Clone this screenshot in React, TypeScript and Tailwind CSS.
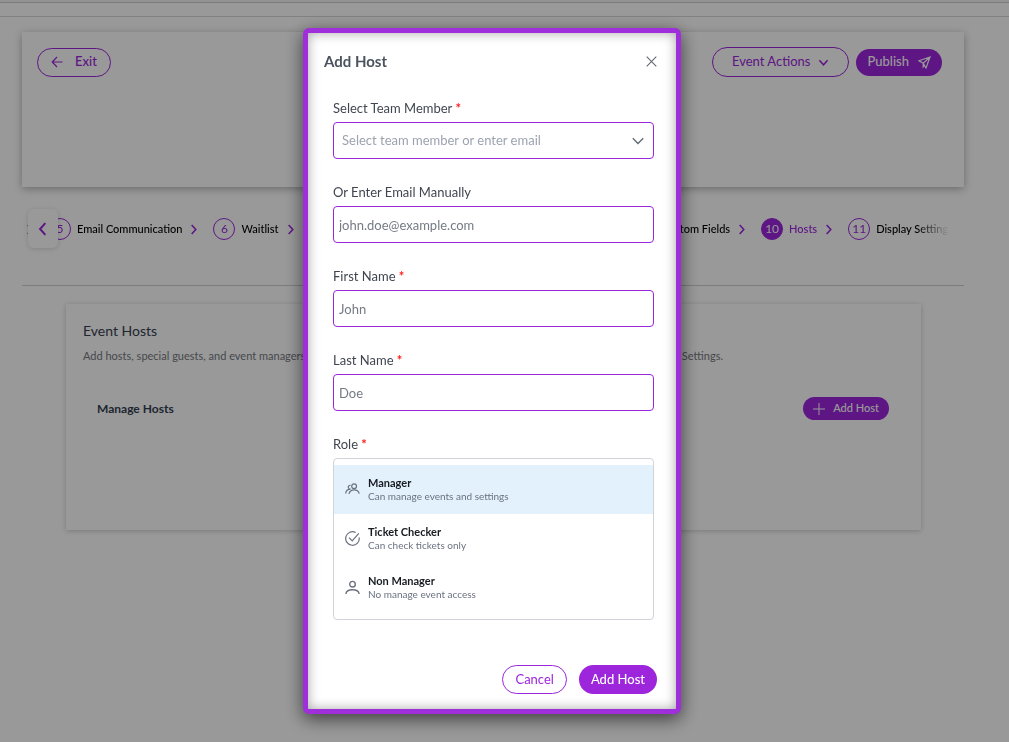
import { useState } from 'react'
import type { ReactNode } from 'react'
import clsx from 'clsx'

const ROLES = [
  { id: 'manager', label: 'Manager', hint: 'Can manage events and settings', icon: TeamIcon },
  { id: 'checker', label: 'Ticket Checker', hint: 'Can check tickets only', icon: CheckIcon },
  { id: 'non-manager', label: 'Non Manager', hint: 'No manage event access', icon: UserIcon },
]

function TeamIcon() {
  return (
    <svg width="15" height="15" viewBox="0 0 15 15" fill="none" stroke="currentColor" strokeWidth="1.2">
      <circle cx="9.1" cy="4.2" r="2.4" />
      <path d="M4 12c.5-2.5 2.500-4.100 5.100-4.100s4.600 1.600 5.200 3.800" />
      <path d="M5.500 3.300a1.900 1.900 0 1 0 .2 3.700M.7 11.500c.2-2.400 1.500-4.200 4-4.200" />
    </svg>
  )
}

function CheckIcon() {
  return (
    <svg width="15" height="15" viewBox="0 0 15 15" fill="none" stroke="currentColor" strokeWidth="1.2">
      <path d="M14.200 6.500A6.800 6.800 0 1 1 10.700 1.500" />
      <path d="M4 6.600l3.200 3.200L13.800 2.300" />
    </svg>
  )
}

function UserIcon() {
  return (
    <svg width="15" height="15" viewBox="0 0 15 15" fill="none" stroke="currentColor" strokeWidth="1.400">
      <circle cx="7.500" cy="4.200" r="2.800" />
      <path d="M.9 14c.2-2.900 2.500-4.200 6.600-4.200s6.400 1.300 6.600 4.200" />
    </svg>
  )
}

function Chevron({ dir = 'right', size = 11 }: { dir?: 'right' | 'left' | 'down'; size?: number }) {
  const paths = { right: 'M4 1l4.500 5L4 11', left: 'M8 1L3.500 6 8 11', down: 'M1.500 3.500L6 8.500l4.500-5' }
  return (
    <svg width={size} height={size} viewBox="0 0 12 12" fill="none" stroke="currentColor" strokeWidth="1.700">
      <path d={paths[dir]} />
    </svg>
  )
}

function Step({ n, label, active }: { n: number; label: string; active?: boolean }) {
  return (
    <li className="flex shrink-0 items-center whitespace-nowrap">
      <span
        className={clsx(
          'mr-[6px] flex size-[22px] items-center justify-center rounded-full border border-[#9d25dc] text-xs',
          active ? 'bg-[#9d25dc] text-white' : 'text-[#9d25dc]',
        )}
      >
        {n}
      </span>
      <span className={clsx('text-[11px] font-medium', active ? 'text-[#9d25dc]' : 'text-black')}>{label}</span>
    </li>
  )
}

function StepArrow() {
  return (
    <li className="mr-[14px] ml-[6px] shrink-0 text-[#9d25dc]">
      <Chevron />
    </li>
  )
}

function Header() {
  return (
    <div className="min-h-[155px] bg-white px-[15px] pt-[15px] shadow-[0_2px_8px_rgba(0,0,0,0.3)]">
      <div className="flex items-center justify-between">
        <button className="flex h-[29px] items-center gap-3 rounded-full border border-[#9d25dc] px-[13px] text-[13px] font-medium text-[#9d25dc]">
          <svg width="12" height="12" viewBox="0 0 12 12" fill="none" stroke="currentColor" strokeWidth="1.200">
            <path d="M11.500 6H1.500M6 1L1.200 6 6 11" />
          </svg>
          Exit
        </button>
        <div className="flex items-center gap-[7px] pr-[7px]">
          <button className="flex h-[30px] items-center gap-2 rounded-full border border-[#9d25dc] px-[19px] text-[13px] text-[#9d25dc]">
            Event Actions
            <Chevron dir="down" />
          </button>
          <button className="flex h-[27px] items-center gap-[9px] rounded-full bg-[#9d25dc] px-[11px] text-[13px] font-medium text-white">
            Publish
            <svg width="13" height="13" viewBox="0 0 13 13" fill="none" stroke="currentColor" strokeWidth="1.200">
              <path d="M12 1L1 4.800l4.200 2.500L8 12z M12 1L5.200 7.300v3.500l1.500-1.700" />
            </svg>
          </button>
        </div>
      </div>
    </div>
  )
}

function Stepper() {
  return (
    <nav className="relative mt-[18px] border-b border-[#d0d0d0] pb-8">
      <button
        aria-label="Previous steps"
        className="absolute top-1 left-[6px] z-10 flex h-[39px] w-[30px] items-center justify-center rounded-md bg-white text-[#9d25dc] shadow-[0_1px_5px_rgba(0,0,0,0.15)]"
      >
        <Chevron dir="left" size={14} />
      </button>
      <div className="mr-[15px] ml-1 flex justify-between overflow-hidden py-[13px] [mask-image:linear-gradient(to_right,black_calc(100%-32px),transparent)]">
        <ol className="-ml-2 flex items-center">
          <StepArrow />
          <Step n={5} label="Email Communication" />
          <StepArrow />
          <Step n={6} label="Waitlist" />
          <StepArrow />
        </ol>
        <ol className="-mr-1 flex items-center">
          <Step n={9} label="Custom Fields" />
          <StepArrow />
          <Step n={10} label="Hosts" active />
          <StepArrow />
          <Step n={11} label="Display Settings" />
        </ol>
      </div>
    </nav>
  )
}

function HostsCard() {
  return (
    <section className="mt-[18px] mr-[43px] ml-[44px] min-h-[226px] bg-white px-[17px] pt-[17px] shadow-[0_1px_5px_rgba(0,0,0,0.2)]">
      <h2 className="text-sm leading-5 text-[#344050]">Event Hosts</h2>
      <div className="mt-[6px] flex justify-between pr-[181px] text-[11px] leading-[18px] text-[#75787f]">
        <p>Add hosts, special guests, and event managers</p>
        <p>Settings.</p>
      </div>
      <div className="mt-8 flex items-center justify-between pr-[15px] pl-[14px]">
        <h3 className="text-xs font-bold text-[#344050]">Manage Hosts</h3>
        <button className="flex h-[23px] items-center gap-2 rounded-full bg-[#9d25dc] px-[10px] text-[11px] font-medium text-white">
          <svg width="12" height="12" viewBox="0 0 12 12" fill="none" stroke="currentColor" strokeWidth="1">
            <path d="M6 0v12M0 6h12" />
          </svg>
          Add Host
        </button>
      </div>
    </section>
  )
}

function Label({ htmlFor, required, children }: { htmlFor: string; required?: boolean; children: ReactNode }) {
  return (
    <label htmlFor={htmlFor} className="block text-[13px] leading-5 text-[#404650]">
      {children} {required && <span className="font-bold text-[#ff1a1a]">*</span>}
    </label>
  )
}

function TextField({ id, label, placeholder, required }: { id: string; label: string; placeholder: string; required?: boolean }) {
  return (
    <div>
      <Label htmlFor={id} required={required}>{label}</Label>
      <input
        id={id}
        placeholder={placeholder}
        className="mt-1 block h-[37px] w-full rounded border border-[#9d25dc] px-[5px] text-[13px] text-gray-800 placeholder:text-[#757b84]"
      />
    </div>
  )
}

function AddHostModal() {
  const [role, setRole] = useState('manager')

  return (
    <div className="fixed inset-0 z-20 flex items-center justify-center bg-black/40 pr-[25px]">
      <div
        role="dialog"
        aria-label="Add Host"
        className="w-[378px] rounded-md border-[5px] border-[#9f2edb] bg-white px-4 pt-[17px] pb-[15px] shadow-[0_5px_18px_rgba(0,0,0,0.6),inset_0_0_12px_rgba(0,0,0,0.35)]"
      >
        <div className="flex items-center justify-between pr-[3px]">
          <h2 className="text-[15px] leading-[22px] font-bold text-[#4b535e]">Add Host</h2>
          <button aria-label="Close" className="text-[#606873]">
            <svg width="11" height="11" viewBox="0 0 11 11" fill="none" stroke="currentColor" strokeWidth="1.100">
              <path d="M.7.7l9.600 9.600M10.300.7L.7 10.300" />
            </svg>
          </button>
        </div>

        <form className="mt-[26px] flex flex-col gap-[23px] pr-[6px] pl-[9px]">
          <div>
            <Label htmlFor="member" required>Select Team Member</Label>
            <div className="relative mt-1">
              <select
                id="member"
                className="block h-[37px] w-full appearance-none rounded border border-[#9d25dc] bg-white px-2 text-[13px] text-[#9ca3af]"
              >
                <option>Select team member or enter email</option>
              </select>
              <svg className="pointer-events-none absolute top-[15px] right-[10px] text-[#606873]" width="12" height="8" viewBox="0 0 12 8" fill="none" stroke="currentColor" strokeWidth="1.300">
                <path d="M.8 1.200L6 6.500l5.200-5.300" />
              </svg>
            </div>
          </div>
          <TextField id="email" label="Or Enter Email Manually" placeholder="john.doe@example.com" />
          <TextField id="first" label="First Name" placeholder="John" required />
          <TextField id="last" label="Last Name" placeholder="Doe" required />
          <div>
            <Label htmlFor="role" required>Role</Label>
            <div id="role" role="listbox" className="mt-1 rounded-sm border border-[#d0d3d8] pt-[6px] pb-[7px]">
              {ROLES.map(({ id, label, hint, icon: Icon }) => (
                <button
                  key={id}
                  type="button"
                  role="option"
                  aria-selected={role === id}
                  onClick={() => setRole(id)}
                  className={clsx(
                    'flex h-[49px] w-full items-center gap-2 px-[11px] text-left text-[#6b7280]',
                    role === id && 'bg-[#e3f1fd]',
                  )}
                >
                  <Icon />
                  <span>
                    <span className="block text-[11px] leading-[14px] font-bold text-[#181c22]">{label}</span>
                    <span className="block text-[10px] leading-[13px]">{hint}</span>
                  </span>
                </button>
              ))}
            </div>
          </div>
        </form>

        <div className="mt-[45px] flex justify-end gap-3 pr-[3px] text-[13px]">
          <button className="h-[29px] rounded-full border border-[#9d25dc] px-3 pt-px text-[#9d25dc]">Cancel</button>
          <button className="h-[29px] rounded-full bg-[#9d25dc] px-3 pt-px font-medium text-white">Add Host</button>
        </div>
      </div>
    </div>
  )
}

export default function App() {
  return (
    <div className="min-h-screen bg-white font-[Lato,'Liberation_Sans',sans-serif]">
      <div className="h-[3px] border-b border-[#cfcfcf] bg-[#f5f5f5]" />
      <div className="h-[14px] border-b border-[#d8d8d8]" />
      <main className="pt-[15px] pr-[45px] pl-[22px]">
        <Header />
        <Stepper />
        <HostsCard />
      </main>
      <AddHostModal />
    </div>
  )
}
